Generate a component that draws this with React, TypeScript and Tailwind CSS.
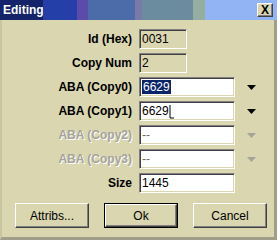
import type { ReactNode } from 'react';

const face = 'bg-[#d9d6b0]';
const sunken =
  'border border-t-[#808080] border-l-[#808080] border-r-white border-b-white shadow-[inset_1px_1px_0_#404040,inset_-1px_-1px_0_#d9d6b0]';
const raised =
  'border border-t-white border-l-white border-r-[#404040] border-b-[#404040] shadow-[inset_-1px_-1px_0_#808080]';

function cn(...parts: (string | false | undefined)[]) {
  return parts.filter(Boolean).join(' ');
}

function Arrow({ enabled }: { enabled: boolean }) {
  return (
    <svg width="9" height="5" viewBox="0 0 9 5" className="ml-[12px]">
      <polygon points="0,0 9,0 4.5,5" fill={enabled ? '#000000' : '#a5a39a'} />
    </svg>
  );
}

function Row({ label, disabled, children }: { label: string; disabled?: boolean; children: ReactNode }) {
  return (
    <div className="flex h-[20px] items-center">
      <div
        className={cn(
          'w-[130px] text-right text-[12px] font-bold leading-none',
          disabled ? 'text-[#a5a39a] [text-shadow:1px_1px_0_#ffffff]' : 'text-black'
        )}
      >
        {label}
      </div>
      <div className="ml-[7px] flex h-full items-center">{children}</div>
    </div>
  );
}

function Field({ value, white, wide, selected, grey }: { value: string; white?: boolean; wide?: boolean; selected?: boolean; grey?: boolean }) {
  return (
    <div
      className={cn(
        'flex h-[20px] items-center pl-[2px] text-[12px] leading-none',
        sunken,
        white ? 'bg-white' : face,
        wide ? 'w-[96px]' : 'w-[48px]',
        grey ? 'text-[#6d6b62]' : 'text-black'
      )}
    >
      {selected ? <span className="bg-[#0a246a] px-[1px] py-[1px] text-white">{value}</span> : <span>{value}</span>}
    </div>
  );
}

function Button({ label, isDefault }: { label: string; isDefault?: boolean }) {
  return (
    <div className={cn('h-[25px] w-[74px]', isDefault ? 'border border-black' : '')}>
      <div className={cn('flex h-full w-full items-center justify-center text-[12px] text-black', face, raised)}>
        {label}
      </div>
    </div>
  );
}

export default function App() {
  return (
    <div
      className={cn('relative flex h-[240px] w-[277px] flex-col overflow-hidden', face)}
      style={{ fontFamily: '"Liberation Sans", Arial, sans-serif' }}
    >
      {/* title bar */}
      <div className="flex h-[20px] items-center">
        <div className="flex h-full w-[43px] items-center bg-[#14236a] pl-[3px] text-[12px] font-bold text-white">
          Editing
        </div>
        <div className="h-full w-[34px] bg-[#2440a8]" />
        <div className="h-full w-[11px] bg-[#5a4ca8]" />
        <div className="h-full w-[47px] bg-[#4b6ca8]" />
        <div className="h-full w-[7px] bg-[#7a7aa8]" />
        <div className="h-full w-[51px] bg-[#6a8c9e]" />
        <div className="h-full w-[12px] bg-[#95aea2]" />
        <div className="flex h-full flex-1 items-center justify-end bg-[#92b4f4] pr-[4px]">
          <div className={cn('flex h-[14px] w-[16px] items-center justify-center text-[12px] font-bold leading-none text-black', face, raised)}>
            X
          </div>
        </div>
      </div>

      <div className="flex flex-1 flex-col border-r-[3px] border-b-[3px] border-l-[2px] border-[#c8c5a0] border-r-[#a09e88] border-b-[#a09e88] pt-[9px]">
        <div className="flex flex-col gap-[4px]">
          <Row label="Id (Hex)">
            <Field value="0031" />
          </Row>
          <Row label="Copy Num">
            <Field value="2" />
          </Row>
          <Row label="ABA (Copy0)">
            <Field value="6629" white wide selected />
            <Arrow enabled />
          </Row>
          <Row label="ABA (Copy1)">
            <div className="relative">
              <Field value="6629" white wide />
              <svg width="5" height="14" viewBox="0 0 5 14" className="absolute left-[30px] top-[4px]">
                <line x1="1" y1="0" x2="1" y2="13" stroke="#000" strokeWidth="1" />
                <line x1="1" y1="13" x2="5" y2="13" stroke="#000" strokeWidth="1" />
              </svg>
            </div>
            <Arrow enabled />
          </Row>
          <Row label="ABA (Copy2)" disabled>
            <Field value="--" white wide grey />
            <Arrow enabled={false} />
          </Row>
          <Row label="ABA (Copy3)" disabled>
            <Field value="--" white wide grey />
            <Arrow enabled={false} />
          </Row>
          <Row label="Size">
            <Field value="1445" white wide />
          </Row>
        </div>

        <div className="mt-[10px] flex gap-[15px] pl-[13px]">
          <Button label="Attribs..." />
          <Button label="Ok" isDefault />
          <Button label="Cancel" />
        </div>
      </div>
    </div>
  );
}
